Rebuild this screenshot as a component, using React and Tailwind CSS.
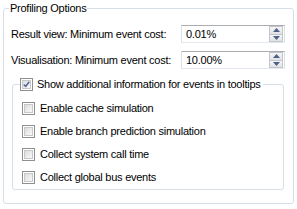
import React from "react";

function SpinBox({ value }) {
  return (
    <div className="flex items-center w-[104px] h-[18px] shrink-0 border border-[#abadb3] border-l-[#dbdfe6] border-r-[#dbdfe6] border-b-[#e3e9ef] bg-white">
      <span className="flex-1 pl-[4px] leading-[16px]">{value}</span>
      <div className="flex flex-col w-[14px] h-[16px] mr-[1px]">
        <div className="flex-1 flex items-center justify-center border border-[#c2c7cf] bg-gradient-to-b from-[#f6f6f6] to-[#e0e2e6]">
          <svg width="7" height="4" viewBox="0 0 7 4">
            <path d="M3.5 0 L7 4 L0 4 Z" fill="#4d6185" />
          </svg>
        </div>
        <div className="flex-1 flex items-center justify-center border border-t-0 border-[#c2c7cf] bg-gradient-to-b from-[#f6f6f6] to-[#e0e2e6]">
          <svg width="7" height="4" viewBox="0 0 7 4">
            <path d="M0 0 L7 0 L3.5 4 Z" fill="#4d6185" />
          </svg>
        </div>
      </div>
    </div>
  );
}

function CheckBox({ checked }) {
  return (
    <div className="w-[13px] h-[13px] border border-[#8e8f8f] bg-white p-[1px] shrink-0">
      <div className="w-full h-full border border-[#c6c8ca] bg-gradient-to-br from-[#dcdddf] to-[#f8f8f8] flex items-center justify-center">
        {checked && (
          <svg width="9" height="9" viewBox="0 0 9 9" className="-mt-[1px]">
            <path d="M1 4.5 L3.5 7 L8 1" stroke="#4a5f97" strokeWidth="1.8" fill="none" />
          </svg>
        )}
      </div>
    </div>
  );
}

function CheckRow({ label }) {
  return (
    <div className="flex items-center h-[13px] gap-[5px]">
      <CheckBox />
      <span className="leading-[13px] whitespace-nowrap">{label}</span>
    </div>
  );
}

export default function App() {
  return (
    <div
      className="w-[297px] h-[209px] bg-white text-black text-[11px] tracking-[-0.25px] pt-[2px] px-[3px] overflow-hidden"
      style={{ fontFamily: '"Liberation Sans", Arial, sans-serif' }}
    >
      <fieldset className="min-w-0 border border-[#d5dfe5] rounded-[3px] w-[291px] h-[202px] p-0">
        <legend className="ml-[5px] px-[1px] leading-[13px] whitespace-nowrap">Profiling Options</legend>
        <div className="pl-[7px] pr-[8px] pt-[10px]">
          <div className="flex flex-col gap-[8px]">
            <div className="flex items-center justify-between">
              <span className="whitespace-nowrap">Result view: Minimum event cost:</span>
              <SpinBox value="0.01%" />
            </div>
            <div className="flex items-center justify-between">
              <span className="whitespace-nowrap">Visualisation: Minimum event cost:</span>
              <SpinBox value="10.00%" />
            </div>
          </div>
          <fieldset className="min-w-0 mt-[9px] ml-[1px] border border-[#d5dfe5] rounded-[3px] w-[272px] h-[112px] p-0">
            <legend className="ml-[7px] pr-[2px] flex items-center gap-[4px] whitespace-nowrap">
              <CheckBox checked />
              <span className="leading-[13px]">Show additional information for events in tooltips</span>
            </legend>
            <div className="pl-[9px] pt-[11px] flex flex-col gap-[10px]">
              <CheckRow label="Enable cache simulation" />
              <CheckRow label="Enable branch prediction simulation" />
              <CheckRow label="Collect system call time" />
              <CheckRow label="Collect global bus events" />
            </div>
          </fieldset>
        </div>
      </fieldset>
    </div>
  );
}
